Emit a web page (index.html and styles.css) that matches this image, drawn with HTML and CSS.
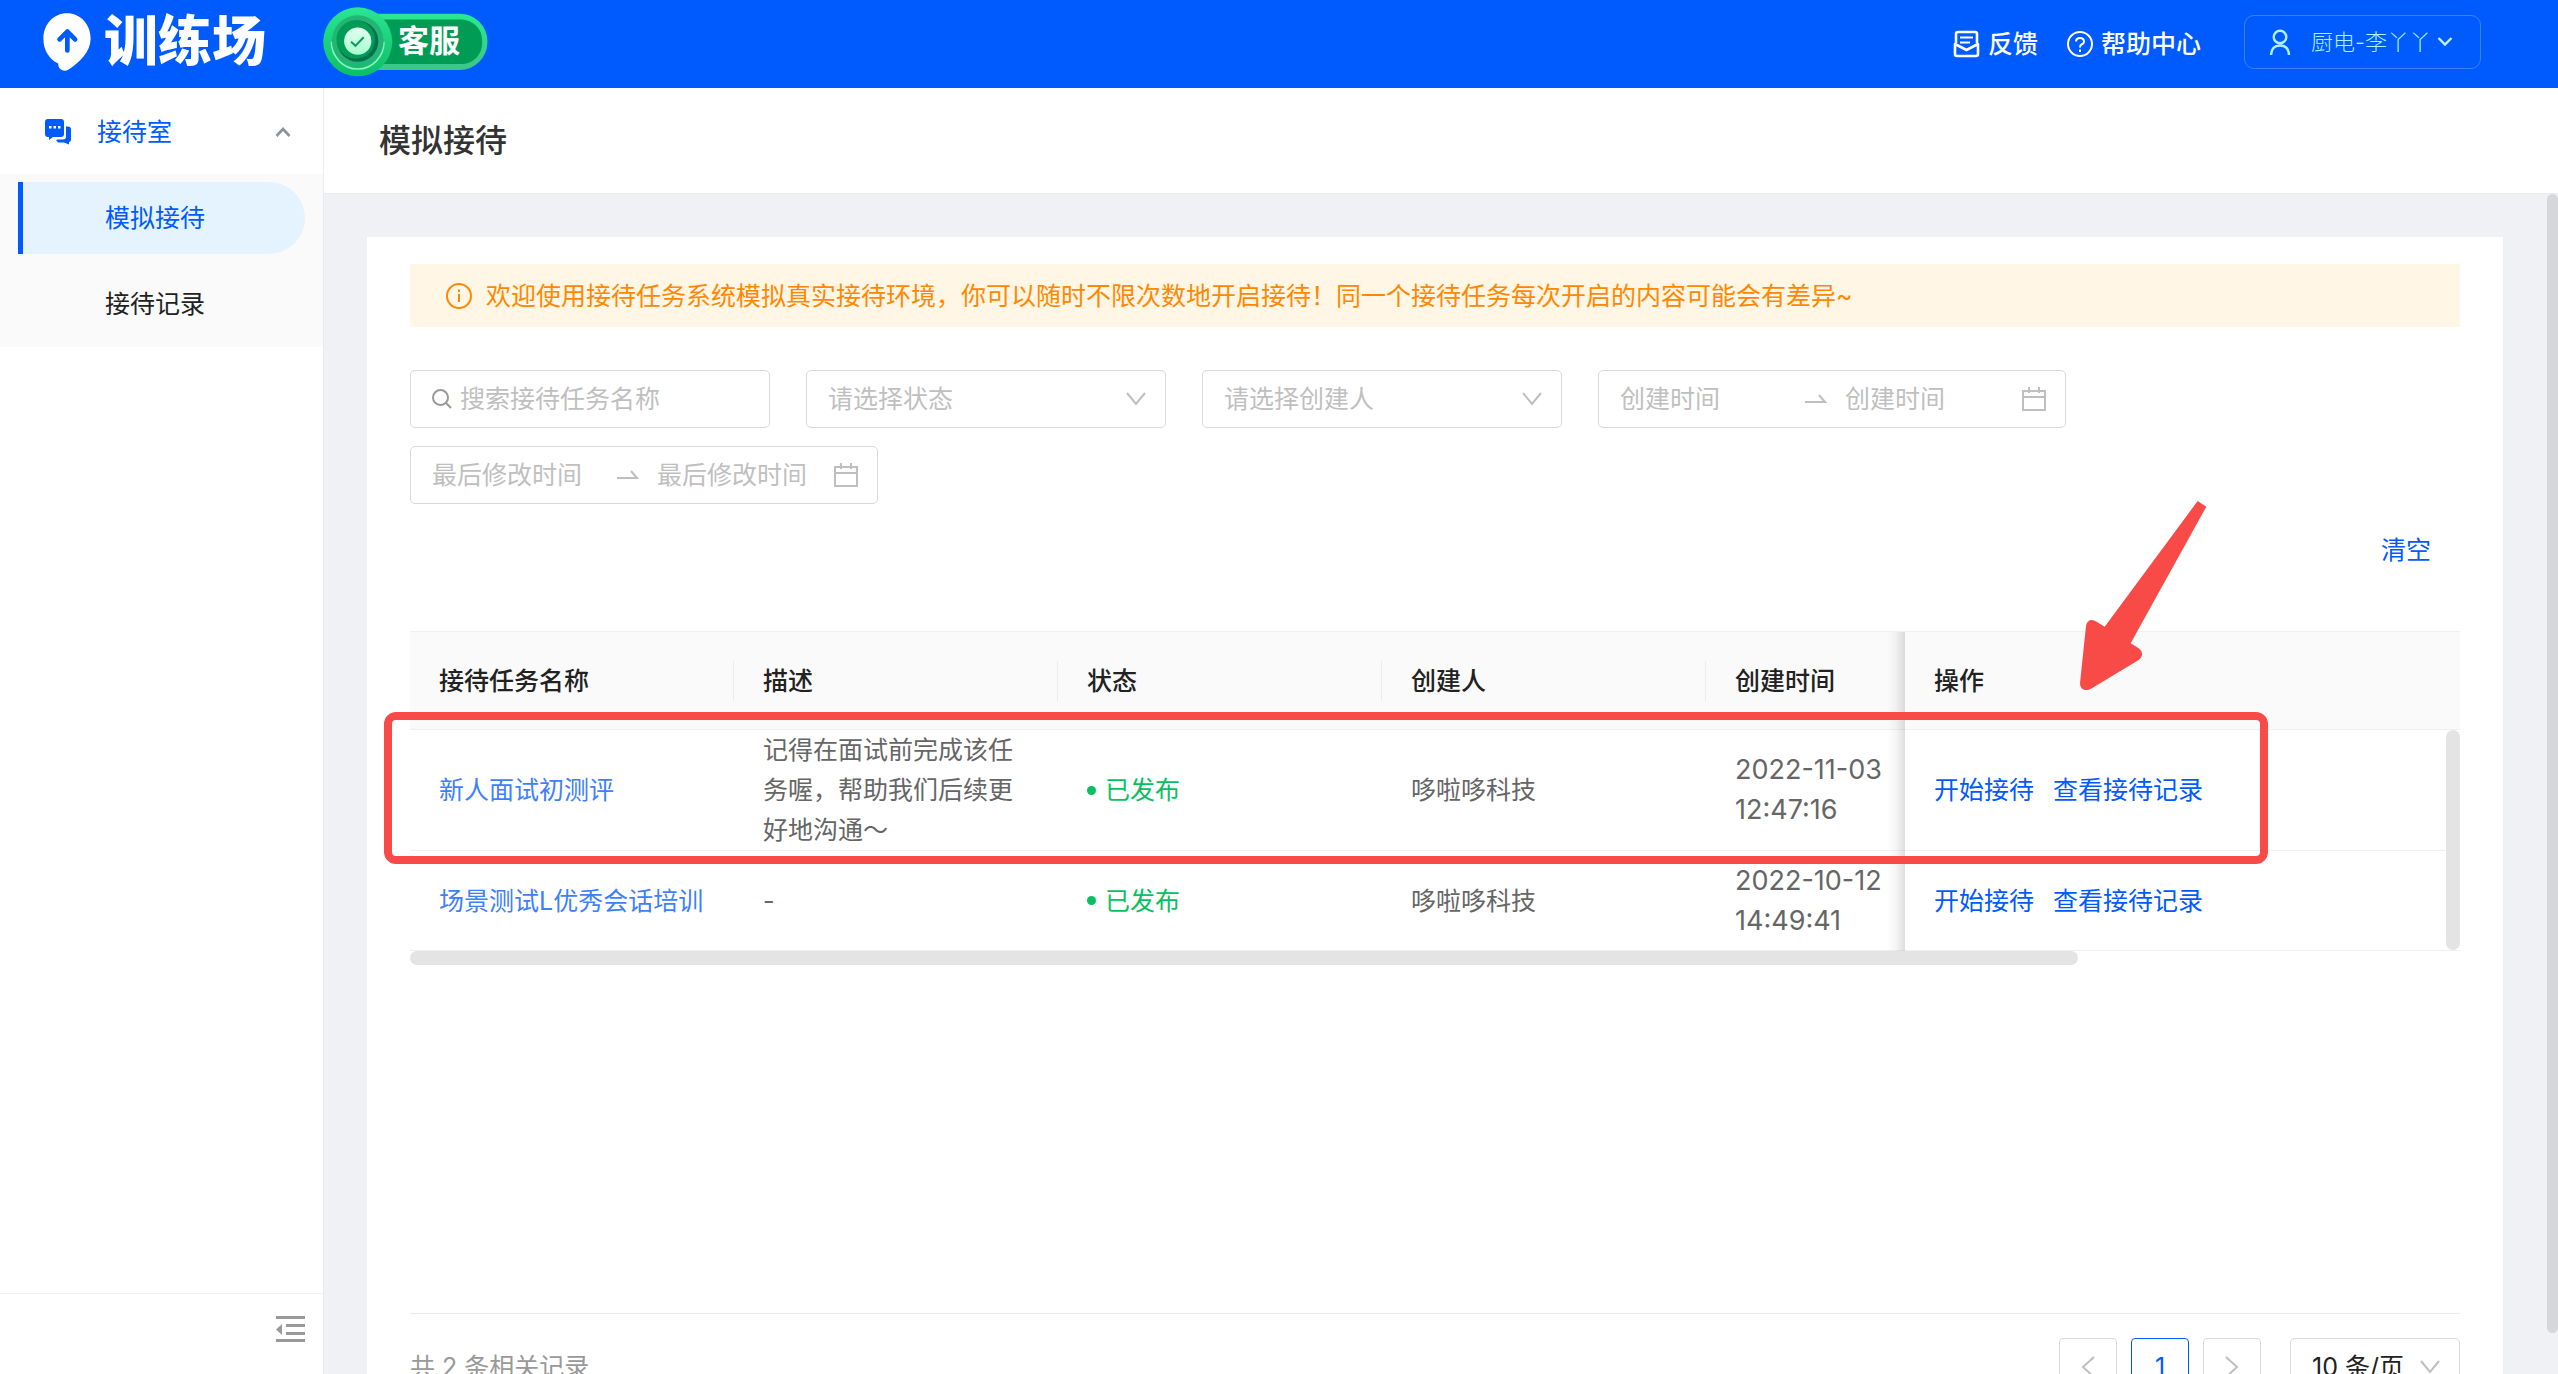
FILE: index.html
```html
<!DOCTYPE html>
<html lang="zh-CN">
<head>
<meta charset="utf-8">
<title>训练场 - 模拟接待</title>
<link rel="stylesheet" href="styles.css">
</head>
<body>
<div class="app">
  <header class="topbar">
    <div class="brand">
      <svg class="brand-mark" viewBox="129 38 142 172" aria-hidden="true">
        <path fill="#fff" d="M200 39C239 39 270 71 270 114C270 152 238 184 204 206C190 214 173 206 174 188C147 174 130 148 130 114C130 71 161 39 200 39Z"/>
        <path fill="none" stroke="#005bff" stroke-width="14" stroke-linecap="round" stroke-linejoin="round" d="M201 149V93M178 116L201 93L224 116"/>
      </svg>
      <span class="brand-name">训练场</span>
    </div>
    <div class="badge">
      <svg class="badge-art" viewBox="968 17 496 211" aria-hidden="true">
        <defs>
          <linearGradient id="pill" x1="0" y1="0" x2="0" y2="1"><stop offset="0" stop-color="#26ea90"/><stop offset="1" stop-color="#3cc68a"/></linearGradient>
          <linearGradient id="ring" x1="0" y1="0" x2="0" y2="1"><stop offset="0" stop-color="#2be592"/><stop offset="1" stop-color="#0abf66"/></linearGradient>
          <linearGradient id="core" x1="0" y1="0" x2="0" y2="1"><stop offset="0" stop-color="#e2fff0"/><stop offset="1" stop-color="#a5ffd0"/></linearGradient>
        </defs>
        <rect x="1030" y="37" width="433" height="170" rx="84" fill="url(#pill)"/>
        <rect x="1030" y="55" width="417" height="134" rx="62" fill="#009b55"/>
        <circle cx="1072" cy="122" r="104" fill="url(#ring)"/>
        <path d="M993 122A79 82 0 0 0 1151 122" fill="none" stroke="#8df2bf" stroke-width="5"/>
        <circle cx="1072" cy="120" r="78" fill="#22b574"/>
        <circle cx="1072" cy="120" r="62" fill="#00704f"/>
        <circle cx="1066" cy="115" r="58" fill="#009b55"/>
        <circle cx="1072" cy="120" r="41" fill="url(#core)"/>
        <path d="M1052 122L1065 134L1090 108" fill="none" stroke="#0a9a5a" stroke-width="6"/>
      </svg>
      <span class="badge-text">客服</span>
    </div>
    <nav class="top-links">
      <a href="#" class="top-link">
        <svg width="28" height="28" viewBox="0 0 28 28" fill="none" stroke="#fff" stroke-width="2" stroke-linejoin="round"><path stroke-width="2.6" d="M3 13V4Q3 2 5 2H22Q24 2 24 4V13M2 14V24Q2 26 4 26H23Q25 26 25 24V14L13.500 20Z"/><path d="M7 7.500H20M7 12.500H17"/></svg>
        <span>反馈</span>
      </a>
      <a href="#" class="top-link">
        <svg width="28" height="28" viewBox="0 0 28 28" fill="none" stroke="#fff" stroke-width="2"><circle cx="14" cy="14" r="12"/><path d="M10 11.500Q10 8 14 8T18 11.500Q18 13.500 15.500 14.500Q14 15.200 14 17.500M14 19.500V22"/></svg>
        <span>帮助中心</span>
      </a>
    </nav>
    <button class="user" type="button">
      <svg width="22" height="28" viewBox="0 0 22 28" fill="none" stroke="#aff0ff" stroke-width="2.400"><circle cx="11" cy="9" r="6.300"/><path d="M2 27Q2.500 17.500 11 17.500T20 27"/></svg>
      <span>厨电-李丫丫</span>
      <svg class="user-caret" width="16" height="12" viewBox="0 0 16 12" fill="none" stroke="#c3f2ff" stroke-width="2.400"><path d="M1.500 2L8 8.500L14.500 2"/></svg>
    </button>
  </header>

  <aside class="sidebar">
    <button class="menu-title" type="button">
      <svg width="28" height="28" viewBox="0 0 28 28"><path fill="#005bff" d="M4 1H17Q20 1 20 4V16Q20 19 17 19H9L5 22V19H4Q1 19 1 16V4Q1 1 4 1Z"/><path fill="#005bff" d="M22 8.500H24Q27 8.500 27 11.500V21Q27 24 25 24V26.500L20 24.500H14L12 22L13.500 21.500H19Q22 21.500 22 18.500Z"/><g fill="#fff"><rect x="5" y="8" width="2.500" height="2.500"/><rect x="9.500" y="8" width="2.500" height="2.500"/><rect x="14" y="8" width="2.500" height="2.500"/></g></svg>
      <span>接待室</span>
      <svg class="menu-caret" width="16" height="12" viewBox="0 0 16 12" fill="none" stroke="#8f9399" stroke-width="2.600"><path d="M1.500 10L8 3L14.500 10"/></svg>
    </button>
    <nav class="submenu">
      <a href="#" class="sub-item sub-item-active">模拟接待</a>
      <a href="#" class="sub-item">接待记录</a>
    </nav>
    <div class="sidebar-foot">
      <button class="fold" type="button" aria-label="收起菜单">
        <svg width="30" height="28" viewBox="0 0 30 28" fill="#999"><path d="M1 1H30V4H1ZM11 9H30V12H11ZM11 17H30V20H11ZM1 24H30V27H1ZM1 14.500L7 9V20Z"/></svg>
      </button>
    </div>
  </aside>

  <main class="main">
    <div class="page-head"><h1>模拟接待</h1></div>
    <div class="scroll">
      <section class="card">
        <p class="notice">
          <svg width="28" height="28" viewBox="0 0 28 28" fill="none" stroke="#ff8800" stroke-width="2"><circle cx="14" cy="14" r="12"/><path d="M14 12V20M14 7.500V10"/></svg>
          <span>欢迎使用接待任务系统模拟真实接待环境，你可以随时不限次数地开启接待！同一个接待任务每次开启的内容可能会有差异~</span>
        </p>

        <form class="filters">
          <label class="field">
            <svg width="20" height="20" viewBox="0 0 20 20" fill="none" stroke="#999" stroke-width="2"><circle cx="8.500" cy="8.500" r="7.500"/><path d="M14 14L19 19"/></svg>
            <input type="text" placeholder="搜索接待任务名称" aria-label="搜索接待任务名称">
          </label>
          <label class="field">
            <select aria-label="状态"><option>请选择状态</option></select>
            <svg width="20" height="16" viewBox="0 0 20 16" fill="none" stroke="#bfbfbf" stroke-width="2"><path d="M1 2L10 13L19 2"/></svg>
          </label>
          <label class="field">
            <select aria-label="创建人"><option>请选择创建人</option></select>
            <svg width="20" height="16" viewBox="0 0 20 16" fill="none" stroke="#bfbfbf" stroke-width="2"><path d="M1 2L10 13L19 2"/></svg>
          </label>
          <div class="field field-range">
            <input type="text" placeholder="创建时间" aria-label="创建时间起">
            <svg width="22" height="12" viewBox="0 0 22 12" fill="none" stroke="#bfbfbf" stroke-width="2"><path d="M0 9H20L14 2"/></svg>
            <input type="text" placeholder="创建时间" aria-label="创建时间止">
            <svg width="24" height="24" viewBox="0 0 24 24" fill="none" stroke="#bfbfbf" stroke-width="2"><path d="M1 4H23V23H1ZM1 10H23M7 0V6M17 0V6"/></svg>
          </div>
          <div class="field field-range">
            <input type="text" placeholder="最后修改时间" aria-label="最后修改时间起">
            <svg width="22" height="12" viewBox="0 0 22 12" fill="none" stroke="#bfbfbf" stroke-width="2"><path d="M0 9H20L14 2"/></svg>
            <input type="text" placeholder="最后修改时间" aria-label="最后修改时间止">
            <svg width="24" height="24" viewBox="0 0 24 24" fill="none" stroke="#bfbfbf" stroke-width="2"><path d="M1 4H23V23H1ZM1 10H23M7 0V6M17 0V6"/></svg>
          </div>
          <div class="filter-actions"><button type="reset" class="clear">清空</button></div>
        </form>

        <div class="table-wrap">
          <table class="tasks">
            <colgroup><col class="col-base"><col class="col-base"><col class="col-base"><col class="col-base"><col class="col-time"><col></colgroup>
            <thead>
              <tr><th>接待任务名称</th><th>描述</th><th>状态</th><th>创建人</th><th>创建时间</th><th class="fixed">操作</th></tr>
            </thead>
            <tbody>
              <tr>
                <td><a href="#" class="name">新人面试初测评</a></td>
                <td>记得在面试前完成该任务喔，帮助我们后续更好地沟通～</td>
                <td><span class="status">已发布</span></td>
                <td>哆啦哆科技</td>
                <td class="time">2022-11-03<br>12:47:16</td>
                <td class="fixed"><div class="ops"><a href="#">开始接待</a><a href="#">查看接待记录</a></div></td>
              </tr>
              <tr>
                <td><a href="#" class="name">场景测试L优秀会话培训</a></td>
                <td>-</td>
                <td><span class="status">已发布</span></td>
                <td>哆啦哆科技</td>
                <td class="time">2022-10-12<br>14:49:41</td>
                <td class="fixed"><div class="ops"><a href="#">开始接待</a><a href="#">查看接待记录</a></div></td>
              </tr>
            </tbody>
          </table>
          <div class="bar-x"></div>
          <div class="bar-y"></div>
          <div class="highlight"></div>
          <svg class="pointer" viewBox="0 0 660 720" aria-hidden="true"><path fill="#f84b48" d="M413 63L439 80L212 490L236 505Q249 515 246 526Q244 534 236 540L93 626Q84 631 75 630Q60 627 60 610L78 438Q80 424 92 420Q101 419 110 425L134 440Z"/></svg>
        </div>

        <footer class="pager">
          <span class="total">共 2 条相关记录</span>
          <div class="pages">
            <button type="button" class="page" aria-label="上一页"><svg width="14" height="22" viewBox="0 0 14 22" fill="none" stroke="#bfbfbf" stroke-width="2"><path d="M13 1L2 11L13 21"/></svg></button>
            <button type="button" class="page page-current">1</button>
            <button type="button" class="page" aria-label="下一页"><svg width="14" height="22" viewBox="0 0 14 22" fill="none" stroke="#bfbfbf" stroke-width="2"><path d="M1 1L12 11L1 21"/></svg></button>
          </div>
          <label class="field field-size">
            <select aria-label="每页条数"><option>10 条/页</option></select>
            <svg width="20" height="16" viewBox="0 0 20 16" fill="none" stroke="#bfbfbf" stroke-width="2"><path d="M1 2L10 13L19 2"/></svg>
          </label>
        </footer>
      </section>
      <div class="page-bar"></div>
    </div>
  </main>
</div>
</body>
</html>
```
FILE: styles.css
```css
* { box-sizing: border-box; }

body {
  margin: 0;
  font-family: "Inter", "Noto Sans CJK SC", sans-serif;
  font-size: 25px;
  line-height: 40px;
  color: #222;
}

a { color: inherit; text-decoration: none; }
svg { display: block; flex: none; }

button, input, select {
  margin: 0;
  padding: 0;
  border: 0;
  background: none;
  font: inherit;
  color: inherit;
}

.app {
  display: grid;
  grid-template: 88px minmax(0, 1fr) / 324px minmax(0, 1fr);
  height: 100vh;
  overflow: hidden;
}

/* top bar */
.topbar {
  grid-column: 1 / -1;
  display: flex;
  align-items: center;
  padding: 0 77px 4px 43px;
  background: #005bff;
  color: #fff;
}

.brand { display: flex; align-items: center; gap: 13px; width: 280px; }
.brand-mark { width: 48px; height: 58px; }
.brand-name { font-size: 54px; font-weight: 900; line-height: 80px; }

.badge {
  position: relative;
  width: 165px;
  height: 70px;
  padding-left: 75px;
  font-size: 31px;
  font-weight: 700;
  line-height: 68px;
}
.badge-art { position: absolute; inset: 0; width: 165px; height: 70px; }
.badge-text { position: relative; }

.top-links { display: flex; gap: 28px; margin-left: auto; padding-top: 4px; font-weight: 500; }
.top-link { display: flex; align-items: center; gap: 7px; }

.user {
  display: flex;
  align-items: center;
  width: 237px;
  height: 54px;
  margin-left: 43px;
  padding-left: 24px;
  border: 1px solid #3d80ff;
  border-radius: 10px;
  color: #aff0ff;
  font-size: 22px;
  font-weight: 300;
}
.user span { margin-left: 20px; }
.user-caret { margin-left: 6px; }

/* sidebar */
.sidebar {
  display: flex;
  flex-direction: column;
  border-right: 1px solid #ebecef;
  background: #fff;
}
.menu-title {
  display: flex;
  align-items: center;
  height: 86px;
  padding: 2px 32px 0 44px;
  color: #005bff;
}
.menu-title span { margin-left: 25px; }
.menu-caret { margin-left: auto; }

.submenu {
  display: flex;
  flex-direction: column;
  gap: 14px;
  padding: 8px 18px 7px;
  background: #fafafa;
}
.sub-item {
  padding-left: 82px;
  border-left: 5px solid transparent;
  line-height: 72px;
}
.sub-item-active {
  border-color: #005bff;
  border-radius: 0 36px 36px 0;
  background: #e5f3ff;
  color: #005bff;
}

.sidebar-foot {
  display: flex;
  justify-content: flex-end;
  align-items: flex-start;
  height: 81px;
  margin-top: auto;
  padding: 21px 18px;
  border-top: 1px solid #f0f0f0;
}

/* page */
.main { display: flex; flex-direction: column; min-width: 0; }
.page-head {
  flex: none;
  height: 106px;
  padding: 29px 55px;
  border-bottom: 1px solid #ebecee;
  background: #fff;
}
.page-head h1 {
  margin: 0;
  font-size: 32px;
  font-weight: 500;
  line-height: 48px;
  color: #333;
}

.scroll {
  position: relative;
  flex: 1;
  min-height: 0;
  padding: 43px 55px 43px 43px;
  overflow: hidden;
  background: #f0f1f5;
}
.page-bar {
  position: absolute;
  top: 0;
  right: 0;
  bottom: 41px;
  width: 11px;
  border-radius: 6px;
  background: #d6d7db;
}

.card {
  display: flex;
  flex-direction: column;
  min-height: calc(100vh - 188px);
  padding: 27px 43px;
  background: #fff;
}

.notice {
  display: flex;
  align-items: center;
  gap: 13px;
  height: 63px;
  margin: 0;
  padding: 0 35px;
  background: #fff6e5;
  color: #ff8800;
}

.filters {
  display: flex;
  flex-wrap: wrap;
  gap: 18px 36px;
  margin-top: 43px;
}
.field {
  display: flex;
  align-items: center;
  gap: 8px;
  width: 360px;
  height: 58px;
  padding: 0 19px 0 21px;
  border: 1px solid #d9d9d9;
  border-radius: 5px;
  color: #bfbfbf;
}
.field input, .field select {
  flex: 1;
  min-width: 0;
  height: 40px;
  appearance: none;
  outline: 0;
}
.field input::placeholder { color: #bfbfbf; opacity: 1; }
.field-range { width: 468px; gap: 18px; }
.field-range input:first-child { flex: none; width: 167px; }

.filter-actions {
  display: flex;
  justify-content: flex-end;
  width: 100%;
  padding: 8px 29px 0 0;
}
.clear { color: #005bff; }

/* table */
.table-wrap { position: relative; margin-top: 61px; }
.tasks {
  width: 100%;
  table-layout: fixed;
  border-spacing: 0;
  color: #666;
}
.col-base { width: 324px; }
.col-time { width: 199px; }
.tasks th, .tasks td {
  position: relative;
  padding: 0 29px;
  border-bottom: 1px solid #f0f0f0;
  text-align: left;
}
.tasks th {
  height: 99px;
  border-top: 1px solid #f0f0f0;
  background: #fafafa;
  color: #222;
  font-weight: 500;
}
.tasks th:nth-child(-n+4)::after {
  content: "";
  position: absolute;
  top: 29px;
  right: 0;
  width: 1px;
  height: 40px;
  background: #ececec;
}
.tasks td { height: 100px; }
.tasks .time {
  padding-right: 10px;
  font-size: 27px;
  white-space: nowrap;
}
.tasks .fixed::before {
  content: "";
  position: absolute;
  top: 0;
  bottom: -1px;
  left: -18px;
  width: 18px;
  background: linear-gradient(to left, rgba(0, 0, 0, 0.13), rgba(0, 0, 0, 0.04) 50%, transparent);
}
.name { color: #3d7fff; }
.status { display: flex; align-items: center; gap: 9px; color: #07c160; }
.status::before {
  content: "";
  width: 9px;
  height: 9px;
  border-radius: 50%;
  background: currentColor;
}
.ops { display: flex; gap: 19px; color: #005bff; }

.bar-x {
  width: 1668px;
  max-width: 100%;
  height: 14px;
  border-radius: 7px;
  background: #e4e4e4;
}
.bar-y {
  position: absolute;
  top: 99px;
  right: 0;
  bottom: 15px;
  width: 14px;
  border-radius: 7px;
  background: #e4e4e4;
}

/* callout over the first row */
.highlight {
  position: absolute;
  top: 81px;
  left: -26px;
  right: 192px;
  height: 152px;
  border: 8px solid #f84b48;
  border-radius: 12px;
}
.pointer {
  position: absolute;
  top: -151px;
  right: 180px;
  width: 220px;
  height: 240px;
}

/* pagination */
.pager {
  display: flex;
  align-items: center;
  margin-top: auto;
  padding-top: 24px;
  border-top: 1px solid #ebebeb;
}
.total { color: #999; }
.pages { display: flex; gap: 14px; margin: 0 29px 0 auto; }
.page {
  display: grid;
  place-items: center;
  width: 58px;
  height: 58px;
  border: 1px solid #d9d9d9;
  border-radius: 4px;
}
.page-current { border-color: #005bff; color: #005bff; }
.field-size { width: 170px; color: #222; }
```
